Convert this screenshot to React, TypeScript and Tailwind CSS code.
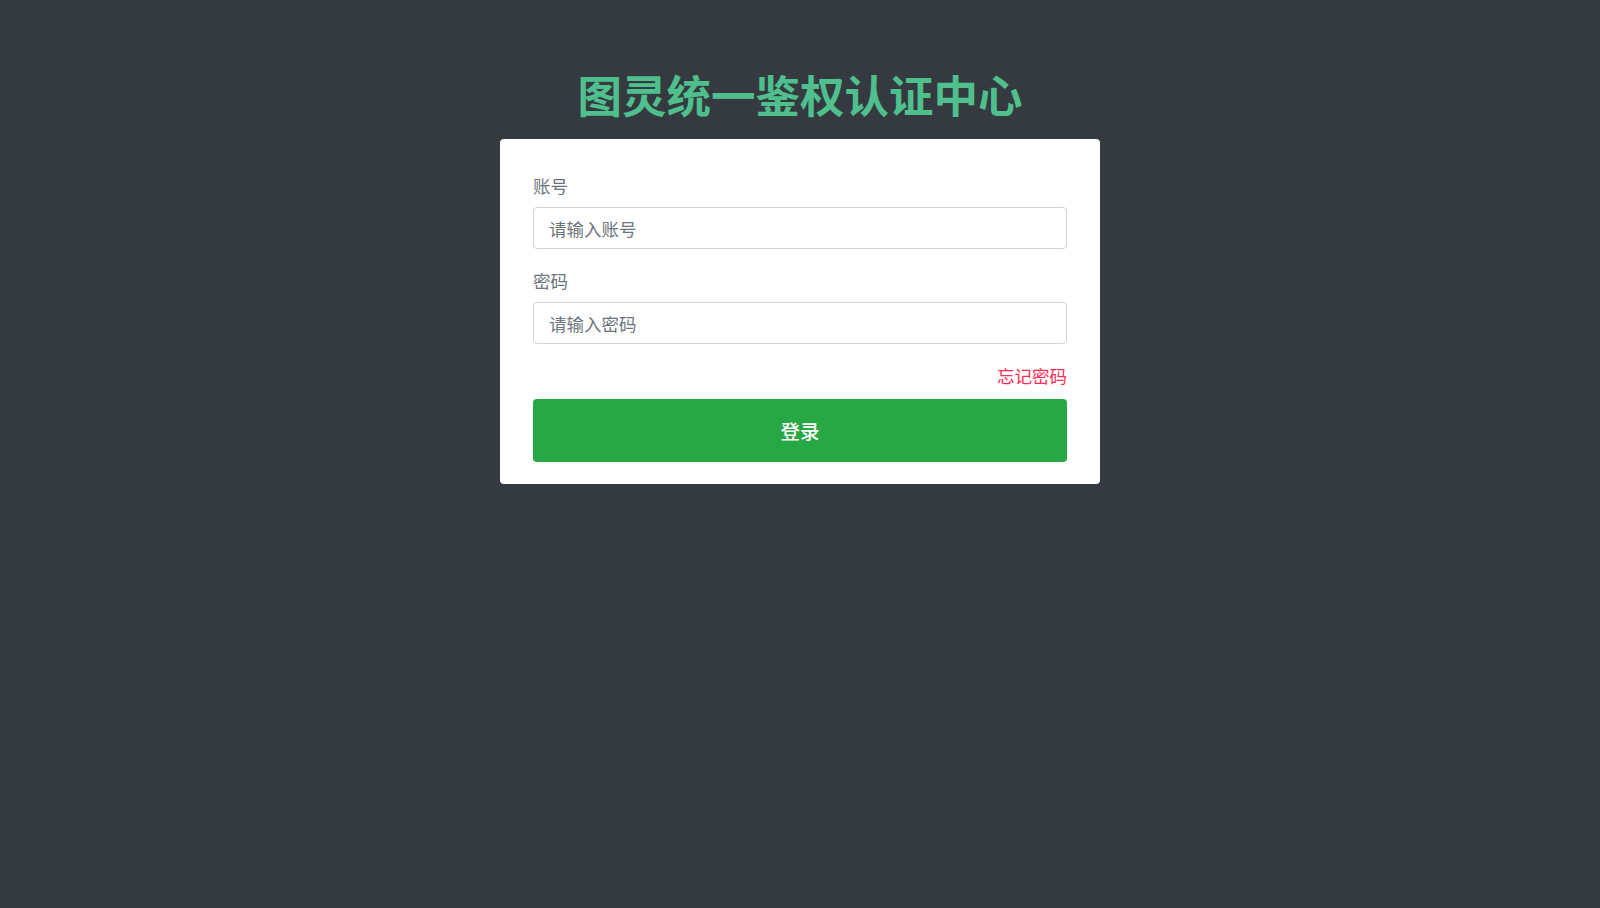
import React from "react";

export default function App() {
  const font = { fontFamily: '"Noto Sans CJK SC", "Noto Sans", sans-serif' };
  return (
    <div className="min-h-[908px] w-full bg-[#343a40] flex flex-col items-center pt-[67px]" style={font}>
      <h1 className="text-[44.5px] leading-[53px] font-bold text-[#4fc08d] mb-[19px]">
        图灵统一鉴权认证中心
      </h1>
      <div className="w-[600px] bg-white rounded-[4px] px-[33px] pt-[35px] pb-[22px] flex flex-col">
        <label className="text-[17.5px] leading-[24px] text-[#6c757d] mb-[9px]">账号</label>
        <input
          className="h-[42px] w-full border border-[#ced4da] rounded-[4px] px-[15px] text-[17.5px] text-[#495057] placeholder:text-[#6c757d] outline-none"
          placeholder="请输入账号"
        />
        <label className="text-[17.5px] leading-[24px] text-[#6c757d] mt-[20px] mb-[9px]">密码</label>
        <input
          type="password"
          className="h-[42px] w-full border border-[#ced4da] rounded-[4px] px-[15px] text-[17.5px] text-[#495057] placeholder:text-[#6c757d] outline-none"
          placeholder="请输入密码"
        />
        <div className="flex justify-end mt-[20px]">
          <span className="text-[17.5px] leading-[24px] text-[#ff2d55]">忘记密码</span>
        </div>
        <button className="mt-[11px] h-[63px] w-full bg-[#28a745] rounded-[4px] text-white text-[19.5px] font-medium">
          登录
        </button>
      </div>
    </div>
  );
}
